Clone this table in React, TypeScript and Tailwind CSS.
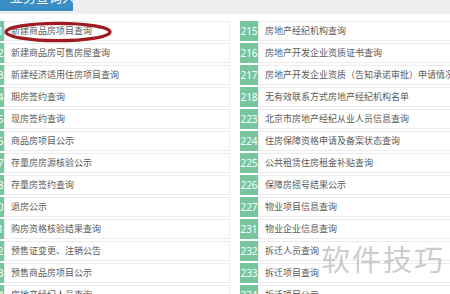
import React from 'react';

const leftItems = [
  { no: '201', name: '新建商品房项目查询' },
  { no: '202', name: '新建商品房可售房屋查询' },
  { no: '203', name: '新建经济适用住房项目查询' },
  { no: '204', name: '期房签约查询' },
  { no: '205', name: '现房签约查询' },
  { no: '206', name: '商品房项目公示' },
  { no: '207', name: '存量房房源核验公示' },
  { no: '208', name: '存量房签约查询' },
  { no: '210', name: '退房公示' },
  { no: '211', name: '购房资格核验结果查询' },
  { no: '212', name: '预售证变更、注销公告' },
  { no: '213', name: '预售商品房项目公示' },
  { no: '214', name: '房地产经纪人员查询' },
];

const rightItems = [
  { no: '215', name: '房地产经纪机构查询' },
  { no: '216', name: '房地产开发企业资质证书查询' },
  { no: '217', name: '房地产开发企业资质（告知承诺审批）申请情况公示' },
  { no: '218', name: '无有效联系方式房地产经纪机构名单' },
  { no: '223', name: '北京市房地产经纪从业人员信息查询' },
  { no: '224', name: '住房保障资格申请及备案状态查询' },
  { no: '225', name: '公共租赁住房租金补贴查询' },
  { no: '226', name: '保障房摇号结果公示' },
  { no: '227', name: '物业项目信息查询' },
  { no: '231', name: '物业企业信息查询' },
  { no: '232', name: '拆迁人员查询' },
  { no: '233', name: '拆迁项目查询' },
  { no: '234', name: '拆迁项目公示' },
];

const Row: React.FC<{ no: string; name: string }> = ({ no, name }) => (
  <div className="flex h-[20px] mb-[2px]">
    <div className="w-[18px] flex-none bg-[#76c59e] text-white text-[10px] leading-[20px] text-center font-['Noto_Sans',sans-serif]">
      {no}
    </div>
    <div className="flex-1 min-w-0 border border-[#ececec] pl-[6px] text-[9px] leading-[18px] text-[#5a5a5a] whitespace-nowrap overflow-hidden">
      {name}
    </div>
  </div>
);

export default function App() {
  return (
    <div className="relative w-[450px] h-[294px] overflow-hidden bg-white font-['Noto_Sans_CJK_SC','Noto_Sans',sans-serif]">
      {/* tab strip */}
      <div className="h-[14px] bg-[#eeeeee]">
        <div className="w-[73px] h-[11px] bg-[#3b8dc6] overflow-hidden">
          <div className="mt-[-11px] pl-[10px] text-white text-[13px] leading-[16px] whitespace-nowrap">
            业务查询入口
          </div>
        </div>
      </div>

      <div className="flex pt-[7px] ml-[-14px]">
        <div className="w-[244px] flex-none">
          {leftItems.map((it) => (
            <Row key={it.no} no={it.no} name={it.name} />
          ))}
        </div>
        <div className="w-[240px] flex-none ml-[10px]">
          {rightItems.map((it) => (
            <Row key={it.no} no={it.no} name={it.name} />
          ))}
        </div>
      </div>

      {/* red marker ellipse */}
      <svg className="absolute left-[3px] top-[21px]" width="110" height="22" viewBox="0 0 110 22">
        <ellipse cx="55" cy="11" rx="52" ry="8.6" fill="none" stroke="#9e1a1e" strokeWidth="3.2" />
      </svg>

      {/* watermark */}
      <div className="absolute left-[321px] top-[240px] text-[29px] leading-[36px] tracking-[2px] text-[#a0a0a0]/55 whitespace-nowrap">
        软件技巧
      </div>
    </div>
  );
}
